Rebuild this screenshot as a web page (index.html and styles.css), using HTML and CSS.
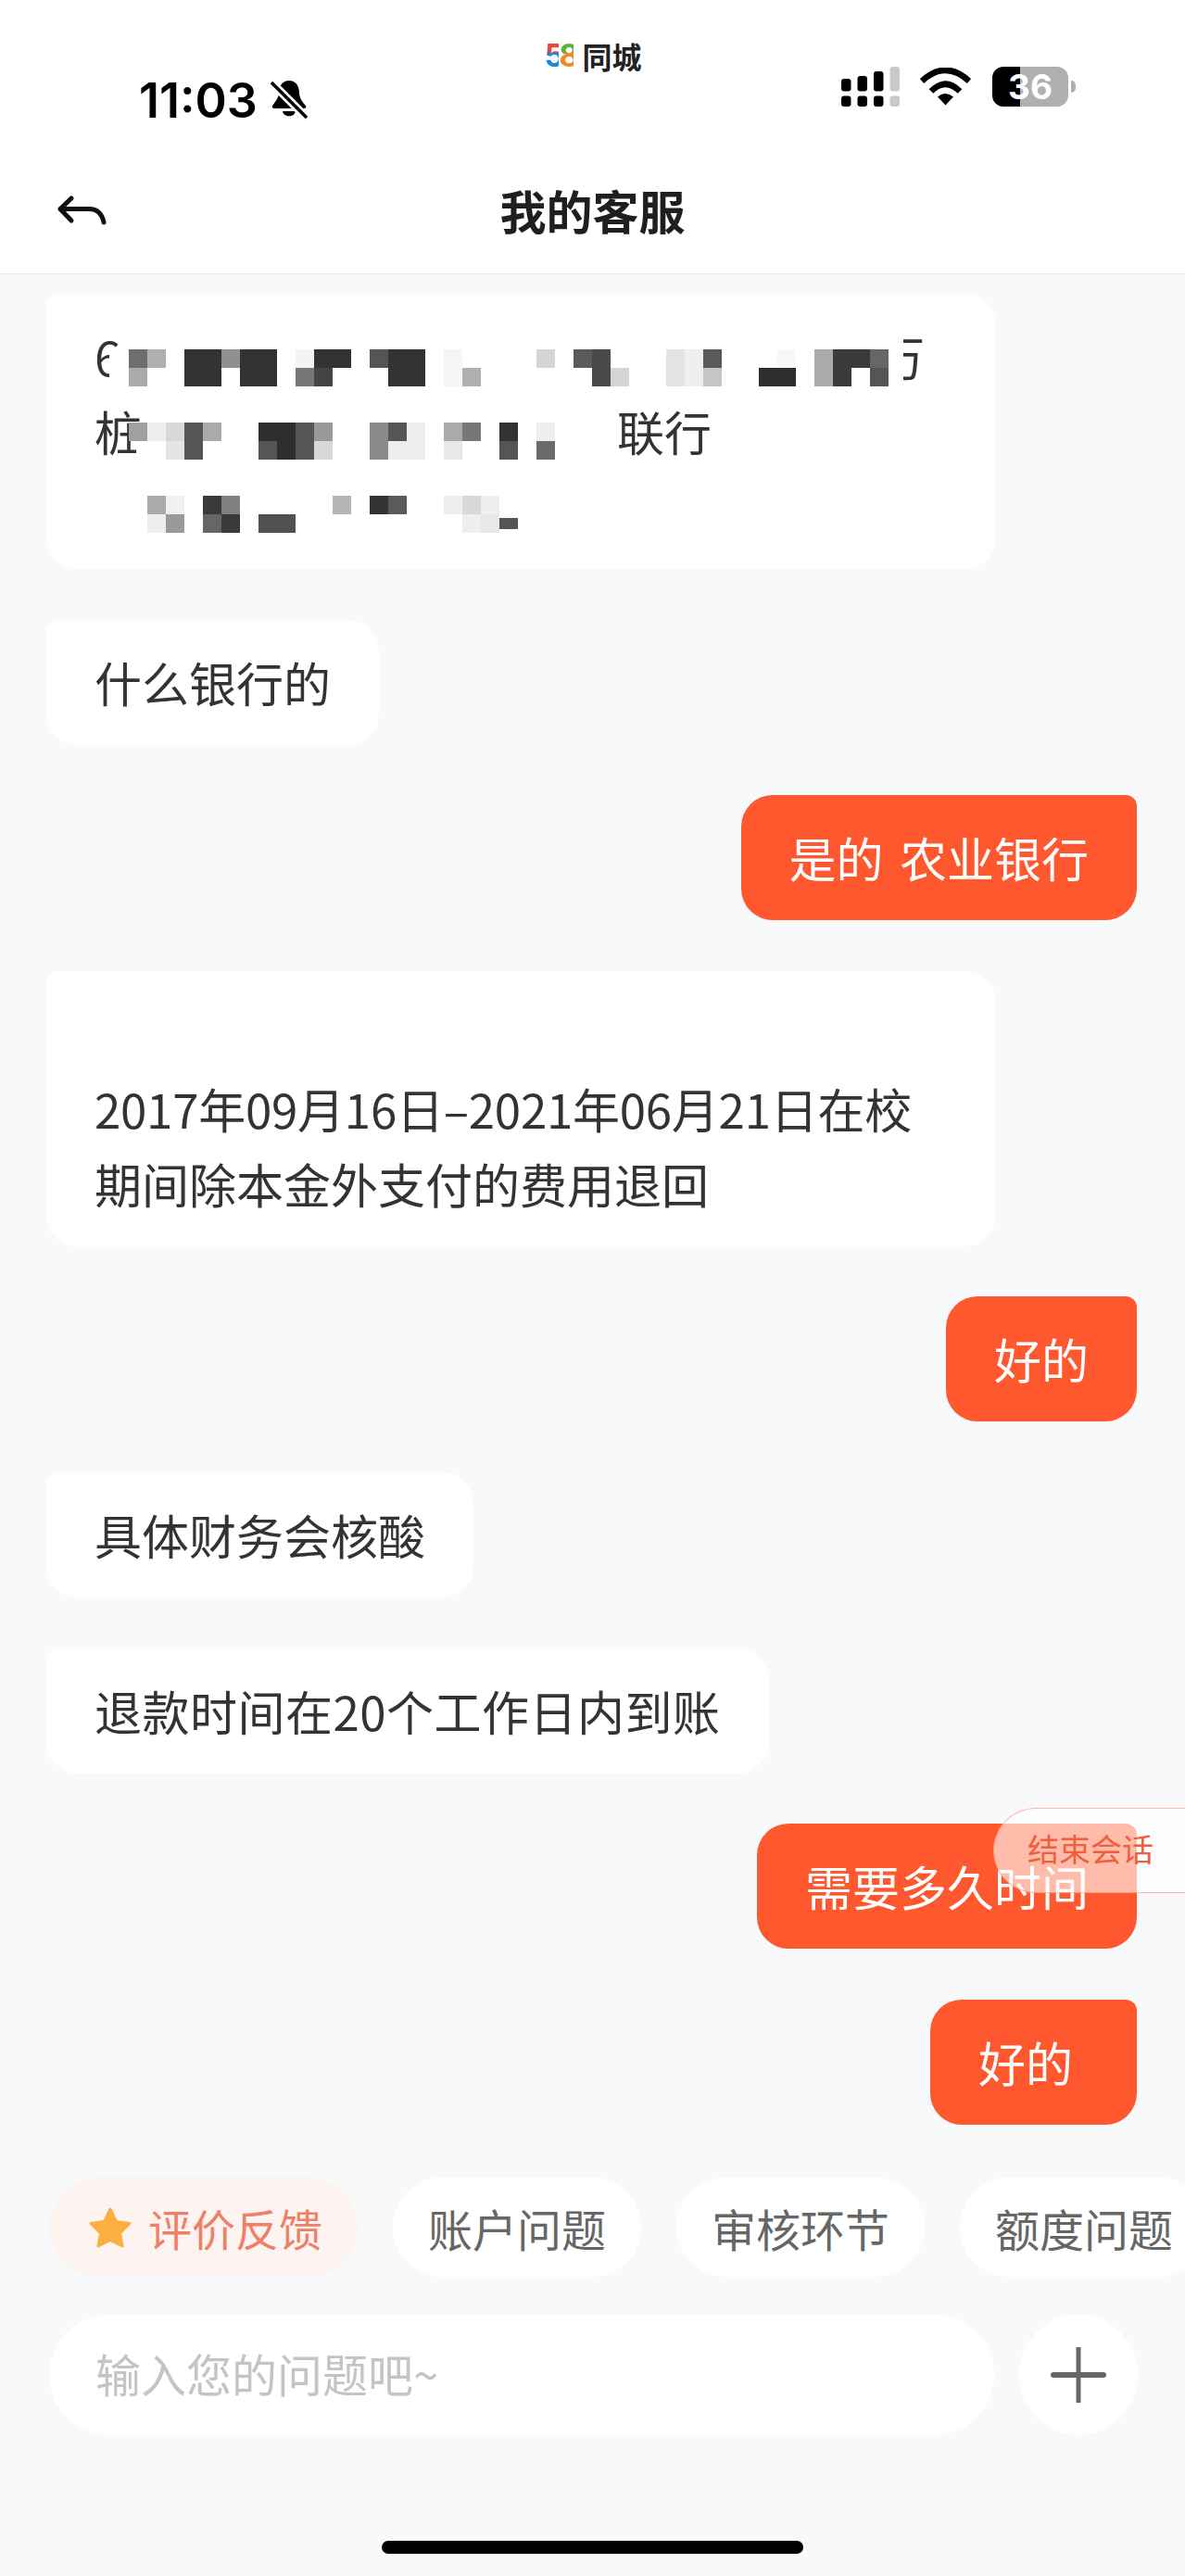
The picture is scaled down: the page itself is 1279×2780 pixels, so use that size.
FILE: index.html
```html
<!DOCTYPE html>
<html lang="zh-CN">
<head>
    <meta charset="UTF-8">
    <meta name="viewport" content="width=device-width, initial-scale=1.0">
    <title>我的客服</title>
    <link rel="stylesheet" href="styles.css">
</head>
<body>
    <div class="header">
        <div class="status">
            <div class="status-left">
                <span class="clock">11:03</span>
                <svg class="bell" viewBox="0 0 40 44">
                    <path d="M20 1C12 1 9 8 9 14C9 20 4 25 2 28Q1 31 4 31L36 31Q39 31 38 28C35 25 31 20 31 14C31 8 28 1 20 1Z"/>
                    <path d="M13 34H27C26 41 14 41 13 34Z"/>
                    <path d="M1 3L39 41" stroke="#fff" stroke-width="9"/>
                    <path d="M1 3L39 41" stroke="#000" stroke-width="3.5"/>
                </svg>
            </div>
            <div class="brand">
                <span class="brand-num"><span class="five">5</span><span class="eight">8</span></span>
                <span class="brand-name">同城</span>
            </div>
            <div class="status-right">
                <svg class="signal" viewBox="0 0 63 44">
                    <rect x="0" y="13" width="10.5" height="13.5" rx="3"/>
                    <rect x="17.5" y="10" width="10.5" height="16.5" rx="3"/>
                    <rect x="35" y="5" width="10.5" height="21.5" rx="3"/>
                    <rect x="52.5" y="0" width="10.5" height="26.5" rx="3" fill="#c9c9c9"/>
                    <rect x="0" y="31.5" width="10.5" height="11.5" rx="3"/>
                    <rect x="17.5" y="31.5" width="10.5" height="11.5" rx="3"/>
                    <rect x="35" y="31.5" width="10.5" height="11.5" rx="3"/>
                    <rect x="52.5" y="31.5" width="10.5" height="11.5" rx="3" fill="#c9c9c9"/>
                </svg>
                <svg class="wifi" viewBox="0 0 55 41">
                    <path d="M2 14.5Q27.5 -9 53 14.5" fill="none" stroke="#000" stroke-width="6.5"/>
                    <path d="M12 25.5Q27.5 10 43 25.5" fill="none" stroke="#000" stroke-width="6.5"/>
                    <path d="M27.5 40.5L19 31.5Q27.5 24.5 36 31.5Z"/>
                </svg>
                <div class="battery">36</div>
                <span class="battery-nub"></span>
            </div>
        </div>
        <div class="nav">
            <svg class="back" viewBox="0 0 60 40">
                <path d="M17 4L5 15.500L17 28M5 15.500H36C44 15.500 50 20 52 30" fill="none" stroke="#111" stroke-width="5" stroke-linecap="round" stroke-linejoin="round"/>
            </svg>
            <h1>我的客服</h1>
        </div>
    </div>

    <div class="messages">
        <div class="bubble wide">
            6<span class="gap gap-first"></span>万<br>桩<span class="gap gap-second"></span>联行<br>&nbsp;
            <svg class="mosaic" viewBox="0 0 1025 297" shape-rendering="crispEdges">
                <rect x="68" y="65" width="21" height="35" fill="#fff"/>
                <rect x="89" y="45" width="836" height="60" fill="#fff"/>
                <rect x="97" y="159" width="20" height="22" fill="#fff"/>
                <g transform="translate(89 60) scale(20)">
                    <rect x="0" y="0" width="1" height="1" fill="#6e6e6e"/>
                    <rect x="1" y="0" width="1" height="1" fill="#b0b0b0"/>
                    <rect x="3" y="0" width="2" height="2" fill="#333"/>
                    <rect x="5" y="0" width="1" height="1" fill="#909090"/>
                    <rect x="6" y="0" width="2" height="2" fill="#333"/>
                    <rect x="9" y="0" width="1" height="1" fill="#f4f4f4"/>
                    <rect x="10" y="0" width="2" height="1" fill="#333"/>
                    <rect x="13" y="0" width="1" height="1" fill="#555"/>
                    <rect x="14" y="0" width="2" height="2" fill="#333"/>
                    <rect x="17" y="0" width="1" height="2" fill="#f5f5f5"/>
                    <rect x="22" y="0" width="1" height="1" fill="#d5d5d5"/>
                    <rect x="24" y="0" width="1" height="1" fill="#5a5a5a"/>
                    <rect x="25" y="0" width="1" height="2" fill="#4a4a4a"/>
                    <rect x="29" y="0" width="1" height="2" fill="#e3e3e3"/>
                    <rect x="30" y="0" width="1" height="2" fill="#efefef"/>
                    <rect x="31" y="0" width="1" height="1" fill="#5a5a5a"/>
                    <rect x="35" y="0" width="1" height="1" fill="#f8f8f8"/>
                    <rect x="37" y="0" width="1" height="2" fill="#aaa"/>
                    <rect x="38" y="0" width="1" height="2" fill="#3a3a3a"/>
                    <rect x="39" y="0" width="1" height="1" fill="#3a3a3a"/>
                    <rect x="40" y="0" width="1" height="1" fill="#666"/>
                    <rect x="0" y="1" width="1" height="1" fill="#aaa"/>
                    <rect x="9" y="1" width="1" height="1" fill="#777"/>
                    <rect x="10" y="1" width="1" height="1" fill="#444"/>
                    <rect x="18" y="1" width="1" height="1" fill="#b0b0b0"/>
                    <rect x="26" y="1" width="1" height="1" fill="#d5d5d5"/>
                    <rect x="31" y="1" width="1" height="1" fill="#c5c5c5"/>
                    <rect x="34" y="1" width="2" height="1" fill="#2e2e2e"/>
                    <rect x="40" y="1" width="1" height="1" fill="#555"/>
                </g>
                <g transform="translate(89 139) scale(20)">
                    <rect x="0" y="0" width="1" height="1" fill="#a0a0a0"/>
                    <rect x="1" y="0" width="1" height="1" fill="#eee"/>
                    <rect x="2" y="0" width="1" height="1" fill="#d8d8d8"/>
                    <rect x="3" y="0" width="1" height="2" fill="#555"/>
                    <rect x="4" y="0" width="1" height="1" fill="#aaa"/>
                    <rect x="7" y="0" width="2" height="1" fill="#2e2e2e"/>
                    <rect x="9" y="0" width="1" height="2" fill="#555"/>
                    <rect x="10" y="0" width="1" height="1" fill="#999"/>
                    <rect x="13" y="0" width="1" height="2" fill="#8a8a8a"/>
                    <rect x="14" y="0" width="1" height="1" fill="#555"/>
                    <rect x="15" y="0" width="1" height="2" fill="#eee"/>
                    <rect x="17" y="0" width="1" height="1" fill="#aaa"/>
                    <rect x="18" y="0" width="1" height="1" fill="#777"/>
                    <rect x="20" y="0" width="1" height="1" fill="#333"/>
                    <rect x="22" y="0" width="1" height="1" fill="#eee"/>
                    <rect x="2" y="1" width="1" height="1" fill="#e5e5e5"/>
                    <rect x="7" y="1" width="1" height="1" fill="#555"/>
                    <rect x="8" y="1" width="1" height="1" fill="#2e2e2e"/>
                    <rect x="10" y="1" width="1" height="1" fill="#d8d8d8"/>
                    <rect x="14" y="1" width="1" height="1" fill="#eee"/>
                    <rect x="17" y="1" width="1" height="1" fill="#e8e8e8"/>
                    <rect x="20" y="1" width="1" height="1" fill="#555"/>
                    <rect x="22" y="1" width="1" height="1" fill="#6a6a6a"/>
                </g>
                <g transform="translate(89 218) scale(20)">
                    <rect x="1" y="0" width="1" height="1" fill="#aaa"/>
                    <rect x="2" y="0" width="1" height="1" fill="#f0f0f0"/>
                    <rect x="4" y="0" width="1" height="1" fill="#3a3a3a"/>
                    <rect x="5" y="0" width="1" height="1" fill="#808080"/>
                    <rect x="11" y="0" width="1" height="1" fill="#b5b5b5"/>
                    <rect x="13" y="0" width="1" height="1" fill="#333"/>
                    <rect x="14" y="0" width="1" height="1" fill="#5a5a5a"/>
                    <rect x="17" y="0" width="1" height="1" fill="#eee"/>
                    <rect x="18" y="0" width="1" height="1" fill="#d8d8d8"/>
                    <rect x="19" y="0" width="1" height="1" fill="#efefef"/>
                    <rect x="1" y="1" width="1" height="1" fill="#eee"/>
                    <rect x="2" y="1" width="1" height="1" fill="#999"/>
                    <rect x="4" y="1" width="1" height="1" fill="#666"/>
                    <rect x="5" y="1" width="1" height="1" fill="#3a3a3a"/>
                    <rect x="7" y="1" width="2" height="1" fill="#505050"/>
                    <rect x="18" y="1" width="1" height="1" fill="#eee"/>
                    <rect x="19" y="1" width="1" height="1" fill="#e8e8e8"/>
                    <rect x="20" y="1.2" width="1" height="0.6" fill="#555"/>
                </g>
            </svg>
        </div>
        <div class="bubble">什么银行的</div>
        <div class="bubble mine spaced">是的 农业银行</div>
        <div class="bubble wide"><br><span class="tight">2017年09月16日–2021年06月21日在校</span><br>期间除本金外支付的费用退回</div>
        <div class="bubble mine">好的</div>
        <div class="bubble">具体财务会核酸</div>
        <div class="bubble loose">退款时间在20个工作日内到账</div>
        <div class="bubble mine">需要多久时间</div>
        <div class="bubble mine trailing">好的</div>
    </div>

    <div class="end-chat">结束会话</div>

    <div class="footer">
        <div class="chips">
            <div class="chip rate">
                <svg class="star" viewBox="0 0 46 44">
                    <path d="M23 2L29.500 15.500L44 17.500L33.500 28L36 42L23 35.500L10 42L12.500 28L2 17.500L16.500 15.500Z" fill="#fbb03f" stroke="#fbb03f" stroke-width="3" stroke-linejoin="round"/>
                </svg>
                评价反馈
            </div>
            <div class="chip">账户问题</div>
            <div class="chip">审核环节</div>
            <div class="chip">额度问题</div>
        </div>
        <div class="composer">
            <div class="input">输入您的问题吧~</div>
            <div class="plus">
                <svg viewBox="0 0 60 60">
                    <path d="M30 1V59" stroke="#666" stroke-width="5" stroke-linecap="round"/>
                    <path d="M3 30H57" stroke="#666" stroke-width="6" stroke-linecap="round"/>
                </svg>
            </div>
        </div>
        <div class="home-bar"></div>
    </div>
</body>
</html>
```

FILE: styles.css
```css
* {
    box-sizing: border-box;
}
html, body {
    margin: 0;
    padding: 0;
}
body {
    position: relative;
    display: flex;
    flex-direction: column;
    width: 1279px;
    height: 2780px;
    overflow: hidden;
    background-color: #f8f9fb;
    color: #333333;
    font-family: "Noto Sans CJK SC", "Noto Sans", sans-serif;
}

/* top bars */
.header {
    height: 296px;
    flex-shrink: 0;
    background-color: #ffffff;
    border-bottom: 1px solid #e9e9ea;
}
.status {
    display: flex;
    justify-content: space-between;
    height: 158px;
    padding: 45px 118px 0 150px;
}
.status-left {
    display: flex;
    align-items: center;
    gap: 14px;
    height: 72px;
    margin-top: 27px;
}
.clock {
    font-family: Inter, sans-serif;
    font-size: 52px;
    font-weight: 600;
    color: #000000;
}
.bell {
    width: 40px;
    height: 44px;
}
.brand {
    display: flex;
    align-items: center;
    height: 30px;
    margin-left: 40px;
}
.brand-num {
    display: inline-block;
    width: 28px;
    margin-right: 13px;
    font-family: Inter, sans-serif;
    font-size: 34px;
    font-weight: 700;
    line-height: 30px;
    letter-spacing: -6px;
}
.five, .eight {
    -webkit-background-clip: text;
    background-clip: text;
    color: transparent;
}
.five {
    background-image: linear-gradient(#e8453c 45%, #1e88d8 45%);
}
.eight {
    background-image: linear-gradient(#5cb531 45%, #f08a24 45%);
}
.brand-name {
    font-size: 32px;
    font-weight: 700;
    line-height: 30px;
    color: #222222;
}
.status-right {
    display: flex;
    align-items: flex-start;
    height: 60px;
    margin-top: 27px;
}
.signal {
    width: 63px;
    height: 44px;
    margin-right: 22px;
}
.wifi {
    width: 55px;
    height: 41px;
    margin-top: 1px;
    margin-right: 23px;
}
.battery {
    width: 82px;
    height: 43px;
    border-radius: 12px;
    background: linear-gradient(to right, #000000 30px, #b0b0b0 30px);
    color: #ffffff;
    font-family: Inter, sans-serif;
    font-size: 37px;
    font-weight: 700;
    line-height: 43px;
    text-align: center;
}
.battery-nub {
    width: 5px;
    height: 13px;
    margin-top: 15px;
    margin-left: 3px;
    border-radius: 0 5px 5px 0;
    background-color: #b0b0b0;
}
.nav {
    position: relative;
    display: flex;
    justify-content: center;
    align-items: center;
    height: 135px;
}
.nav h1 {
    margin: 0;
    font-size: 50px;
    font-weight: 700;
    color: #1f1f1f;
}
.back {
    position: absolute;
    left: 60px;
    top: 52px;
    width: 60px;
    height: 40px;
}

/* chat */
.messages {
    flex: 1;
    display: flex;
    flex-direction: column;
    align-items: flex-start;
    gap: 54.6px;
    padding: 21px 52px 0 50px;
    overflow: hidden;
}
.bubble {
    position: relative;
    flex-shrink: 0;
    padding: 27px 52px;
    border-radius: 14px 34px 34px 34px;
    background-color: #ffffff;
    font-size: 51px;
    line-height: 81px;
}
.wide {
    width: 1025px;
}
.mine {
    align-self: flex-end;
    border-radius: 34px 12px 34px 34px;
    background-color: #ff582e;
    color: #ffffff;
}
.spaced {
    word-spacing: 6px;
}
.tight {
    letter-spacing: -0.25px;
}
.loose {
    letter-spacing: 0.5px;
}
.trailing {
    padding-right: 69px;
}
.gap {
    display: inline-block;
}
.gap-first {
    width: 817px;
}
.gap-second {
    width: 513px;
}
.mosaic {
    position: absolute;
    left: 0;
    top: 0;
    width: 1025px;
    height: 297px;
}

/* floating end chat button */
.end-chat {
    position: absolute;
    top: 1951px;
    left: 1072px;
    width: 240px;
    height: 92px;
    padding-left: 36px;
    border: 1.5px solid rgba(255, 125, 95, 0.55);
    border-radius: 46px 0 0 46px;
    background-color: rgba(255, 255, 255, 0.6);
    color: #ee5f3c;
    font-size: 34px;
    line-height: 85px;
}

/* bottom */
.footer {
    flex-shrink: 0;
    height: 430px;
}
.chips {
    display: flex;
    gap: 38px;
    height: 107px;
    padding-left: 53px;
    overflow: hidden;
}
.chip {
    display: flex;
    align-items: center;
    flex-shrink: 0;
    padding: 0 38px;
    border-radius: 54px;
    background-color: #ffffff;
    color: #666666;
    font-size: 48px;
}
.rate {
    padding: 0 38px 0 43px;
    background-color: #fdf3f1;
    color: #ee8068;
    font-size: 47px;
}
.star {
    width: 46px;
    height: 44px;
    margin-right: 18px;
}
.composer {
    display: flex;
    gap: 27px;
    margin-top: 41px;
    padding-left: 53px;
}
.input {
    width: 1020px;
    height: 130px;
    padding-left: 50px;
    border-radius: 65px;
    background-color: #ffffff;
    color: #c4c4c6;
    font-size: 49px;
    line-height: 126px;
}
.plus {
    display: flex;
    justify-content: center;
    align-items: center;
    width: 128px;
    height: 130px;
    border-radius: 50%;
    background-color: #ffffff;
}
.plus svg {
    width: 60px;
    height: 60px;
}
.home-bar {
    width: 455px;
    height: 14px;
    margin: 114px auto 0;
    border-radius: 7px;
    background-color: #000000;
}
```
